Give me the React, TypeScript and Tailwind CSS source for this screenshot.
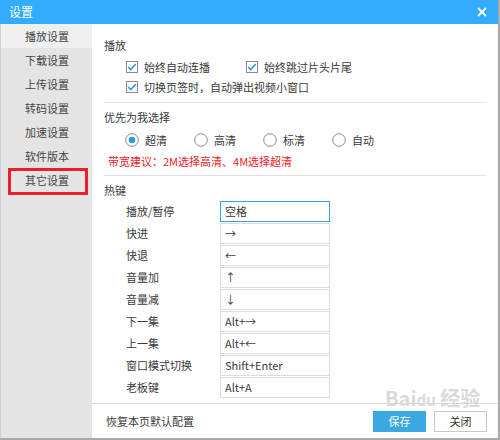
const font = { fontFamily: '"Microsoft YaHei", "Noto Sans CJK SC", "Noto Sans", sans-serif' }

function Check({ label }: { label: string }) {
  return (
    <div className="flex items-center gap-[6px]">
      <svg width="12" height="12" viewBox="0 0 12 12">
        <rect x="0.5" y="0.5" width="11" height="11" fill="#fff" stroke="#8a8a8a" />
        <path d="M2.3 6.1 L4.8 8.6 L9.8 3.1" fill="none" stroke="#2a9be0" strokeWidth="1.5" />
      </svg>
      <span>{label}</span>
    </div>
  )
}

function Radio({ label, on }: { label: string; on?: boolean }) {
  return (
    <div className="flex items-center gap-[6px] w-[69px]">
      <svg width="14" height="14" viewBox="0 0 14 14">
        <circle cx="7" cy="7" r="6.3" fill="#fff" stroke="#8a8a8a" />
        {on && <circle cx="7" cy="7" r="3.3" fill="#2a9be0" />}
      </svg>
      <span>{label}</span>
    </div>
  )
}

const menu = ['播放设置', '下载设置', '上传设置', '转码设置', '加速设置', '软件版本', '其它设置']

const keys: [string, string][] = [
  ['播放/暂停', '空格'],
  ['快进', '→'],
  ['快退', '←'],
  ['音量加', '↑'],
  ['音量减', '↓'],
  ['下一集', 'Alt+→'],
  ['上一集', 'Alt+←'],
  ['窗口模式切换', 'Shift+Enter'],
  ['老板键', 'Alt+A'],
]

export default function App() {
  return (
    <div
      className="relative w-[500px] h-[440px] bg-white text-[11px] text-[#3a3a3a] flex flex-col border-r-2 border-b-2 border-[#a9a9a9] overflow-hidden"
      style={font}
    >
      <div className="h-[24px] shrink-0 bg-[#31adfc] flex items-center justify-between pl-[9px] pr-[11px] text-white text-[12px]">
        <span>设置</span>
        <svg width="10" height="10" viewBox="0 0 10 10">
          <path d="M1 1 L9 9 M9 1 L1 9" stroke="#fff" strokeWidth="1.8" />
        </svg>
      </div>
      <div className="flex flex-1 min-h-0">
        <div className="w-[92px] shrink-0 bg-[#e4e4e4] border-l border-[#d0d0d0]">
          {menu.map((m, i) => (
            <div
              key={m}
              className={`h-[24px] flex items-center pl-[24px] text-[#444] ${i === 0 ? 'bg-[#efefef]' : ''}`}
            >
              {m}
            </div>
          ))}
        </div>
        <div className="flex-1 flex flex-col min-w-0">
          <div className="flex-1 min-h-0 pl-[12px] pr-[12px] pt-[12px]">
            <div className="h-[18px] leading-[18px]">播放</div>
            <div className="mt-[3px] h-[20px] flex items-center pl-[22px]">
              <div className="w-[120px]">
                <Check label="始终自动连播" />
              </div>
              <Check label="始终跳过片头片尾" />
            </div>
            <div className="h-[20px] flex items-center pl-[22px]">
              <Check label="切换页签时，自动弹出视频小窗口" />
            </div>
            <div className="mt-[5px] border-t border-[#e2e2e2]" />
            <div className="mt-[5px] h-[18px] leading-[18px]">优先为我选择</div>
            <div className="mt-[4px] h-[20px] flex items-center pl-[21px]">
              <Radio label="超清" on />
              <Radio label="高清" />
              <Radio label="标清" />
              <Radio label="自动" />
            </div>
            <div className="mt-[2px] h-[18px] leading-[18px] pl-[4px] text-[#f0202a]">
              带宽建议：2M选择高清、4M选择超清
            </div>
            <div className="mt-[5px] border-t border-[#e2e2e2]" />
            <div className="mt-[5px] h-[18px] leading-[18px]">热键</div>
            <div className="mt-[2px] pl-[22px]">
              {keys.map(([k, v], i) => (
                <div key={k} className="h-[22px] flex items-start">
                  <div className="w-[94px] h-[21px] leading-[21px]">{k}</div>
                  <div
                    className={`w-[110px] h-[21px] leading-[19px] pl-[4px] border ${i === 0 ? 'border-[#2fa6e0]' : 'border-[#dcdcdc]'}`}
                  >
                    {v}
                  </div>
                </div>
              ))}
            </div>
          </div>
          <div className="h-[35px] shrink-0 border-t border-[#d8d8d8] flex items-center pl-[14px] pr-[11px]">
            <span className="flex-1">恢复本页默认配置</span>
            <button className="w-[53px] h-[21px] bg-[#3aa8e2] text-white">保存</button>
            <button className="ml-[8px] w-[53px] h-[21px] bg-white border border-[#c8c8c8] text-[#333]">关闭</button>
          </div>
        </div>
      </div>

      <div className="absolute left-[8px] top-[168px] w-[80px] h-[27px] border-[3px] border-[#e8202a]" />

      <div className="absolute left-[385px] top-[388px] text-[#dadada] text-[20px] font-bold leading-none pointer-events-none">
        Bai<span className="text-[15px]">du</span> 经验
      </div>
    </div>
  )
}
